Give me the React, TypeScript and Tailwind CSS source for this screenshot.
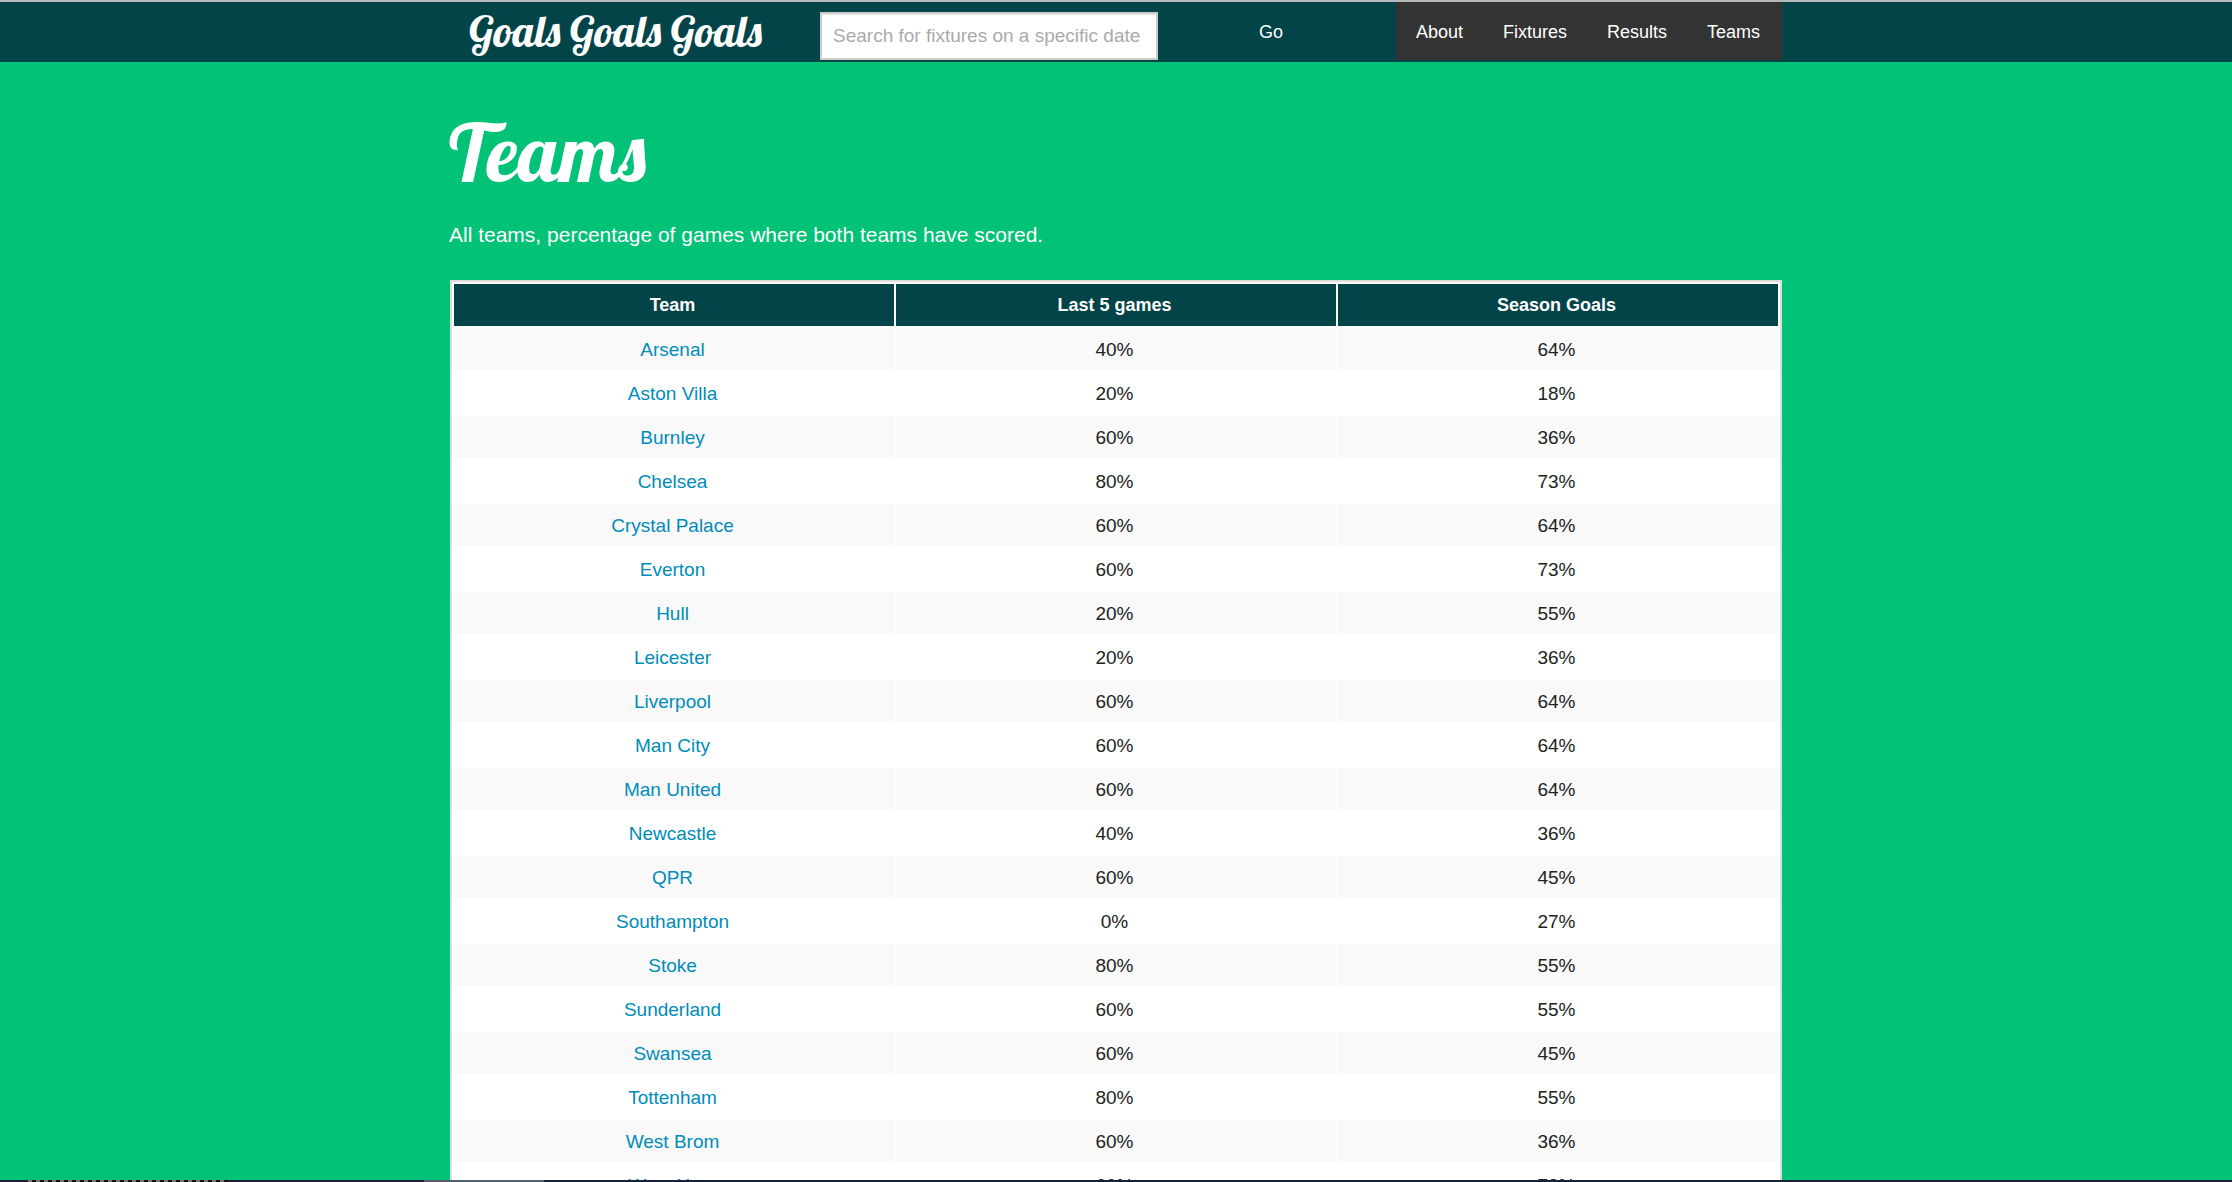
const teams: [string, string, string][] = [
  ["Arsenal", "40%", "64%"],
  ["Aston Villa", "20%", "18%"],
  ["Burnley", "60%", "36%"],
  ["Chelsea", "80%", "73%"],
  ["Crystal Palace", "60%", "64%"],
  ["Everton", "60%", "73%"],
  ["Hull", "20%", "55%"],
  ["Leicester", "20%", "36%"],
  ["Liverpool", "60%", "64%"],
  ["Man City", "60%", "64%"],
  ["Man United", "60%", "64%"],
  ["Newcastle", "40%", "36%"],
  ["QPR", "60%", "45%"],
  ["Southampton", "0%", "27%"],
  ["Stoke", "80%", "55%"],
  ["Sunderland", "60%", "55%"],
  ["Swansea", "60%", "45%"],
  ["Tottenham", "80%", "55%"],
  ["West Brom", "60%", "36%"],
  ["West Ham", "60%", "73%"],
];

const links = ["About", "Fixtures", "Results", "Teams"];

function Header() {
  return (
    <header className="shrink-0 border-t-2 border-[#b5b9b9] bg-[#024448]">
      <div className="mx-auto flex h-15 max-w-[1334px] items-start pr-px">
        <a
          href="#"
          className="w-[371px] shrink-0 pl-5 font-['Lobster','Liberation_Serif',serif] text-[43px] leading-[58px] font-normal whitespace-nowrap text-white"
        >
          Goals Goals Goals
        </a>
        <form className="flex flex-1 items-start pt-2.5" onSubmit={(e) => e.preventDefault()}>
          <input
            type="text"
            aria-label="Search for fixtures on a specific date"
            placeholder="Search for fixtures on a specific date"
            className="h-12 w-[338px] border-2 border-[#ccc] bg-white px-[11px] text-[19px] text-black shadow-[inset_0_1px_2px_rgba(0,0,0,0.1)] outline-none placeholder:text-[#aaa]"
          />
          <button type="submit" className="flex-1 pr-3 text-center text-lg leading-10 text-white">
            Go
          </button>
        </form>
        <nav className="flex h-[58px] items-center gap-10 bg-[#333] pt-0.5 pr-[22px] pl-5 text-lg text-white">
          {links.map((link) => (
            <a key={link} href="#" className="whitespace-nowrap">
              {link}
            </a>
          ))}
        </nav>
      </div>
    </header>
  );
}

function TeamsTable() {
  return (
    <div className="px-px">
      <table className="w-full table-fixed border-separate border-spacing-[2px] border-2 border-[#ddd] bg-white text-center text-[19px] leading-[41px]">
        <thead>
          <tr className="bg-[#024448] text-lg leading-[41px] text-white">
            <th className="pt-px pr-[3px] pb-0 pl-0 font-bold">Team</th>
            <th className="pt-px pr-[3px] pb-0 pl-0 font-bold">Last 5 games</th>
            <th className="pt-px pr-[3px] pb-0 pl-0 font-bold">Season Goals</th>
          </tr>
        </thead>
        <tbody className="text-[#222]">
          {teams.map(([name, last, season]) => (
            <tr key={name} className="odd:bg-[#f9f9f9]">
              <td className="pt-px pr-[3px] pb-0 pl-0">
                <a href="#" className="text-[#008cba]">
                  {name}
                </a>
              </td>
              <td className="pt-px pr-[3px] pb-0 pl-0">{last}</td>
              <td className="pt-px pr-[3px] pb-0 pl-0">{season}</td>
            </tr>
          ))}
        </tbody>
      </table>
    </div>
  );
}

export default function App() {
  return (
    <div className="flex h-screen flex-col overflow-hidden bg-[#02c278] font-['Liberation_Sans',Arial,sans-serif]">
      <Header />
      <main className="mx-auto min-h-0 w-full max-w-[1334px] flex-1 overflow-hidden">
        <h1 className="pt-[30px] font-['Lobster','Liberation_Serif',serif] text-[80px] leading-[120px] font-normal text-white">
          Teams
        </h1>
        <p className="pt-1.5 pb-7 text-[21px] leading-[34px] text-white">
          All teams, percentage of games where both teams have scored.
        </p>
        <TeamsTable />
      </main>
      <div className="flex h-0.5 shrink-0 bg-[#14233a]">
        <div className="ml-7 w-50 bg-[repeating-linear-gradient(90deg,#777_0_4px,#111_4px_8px)]" />
        <div className="ml-[196px] w-30 bg-[#53616e]" />
      </div>
    </div>
  );
}
